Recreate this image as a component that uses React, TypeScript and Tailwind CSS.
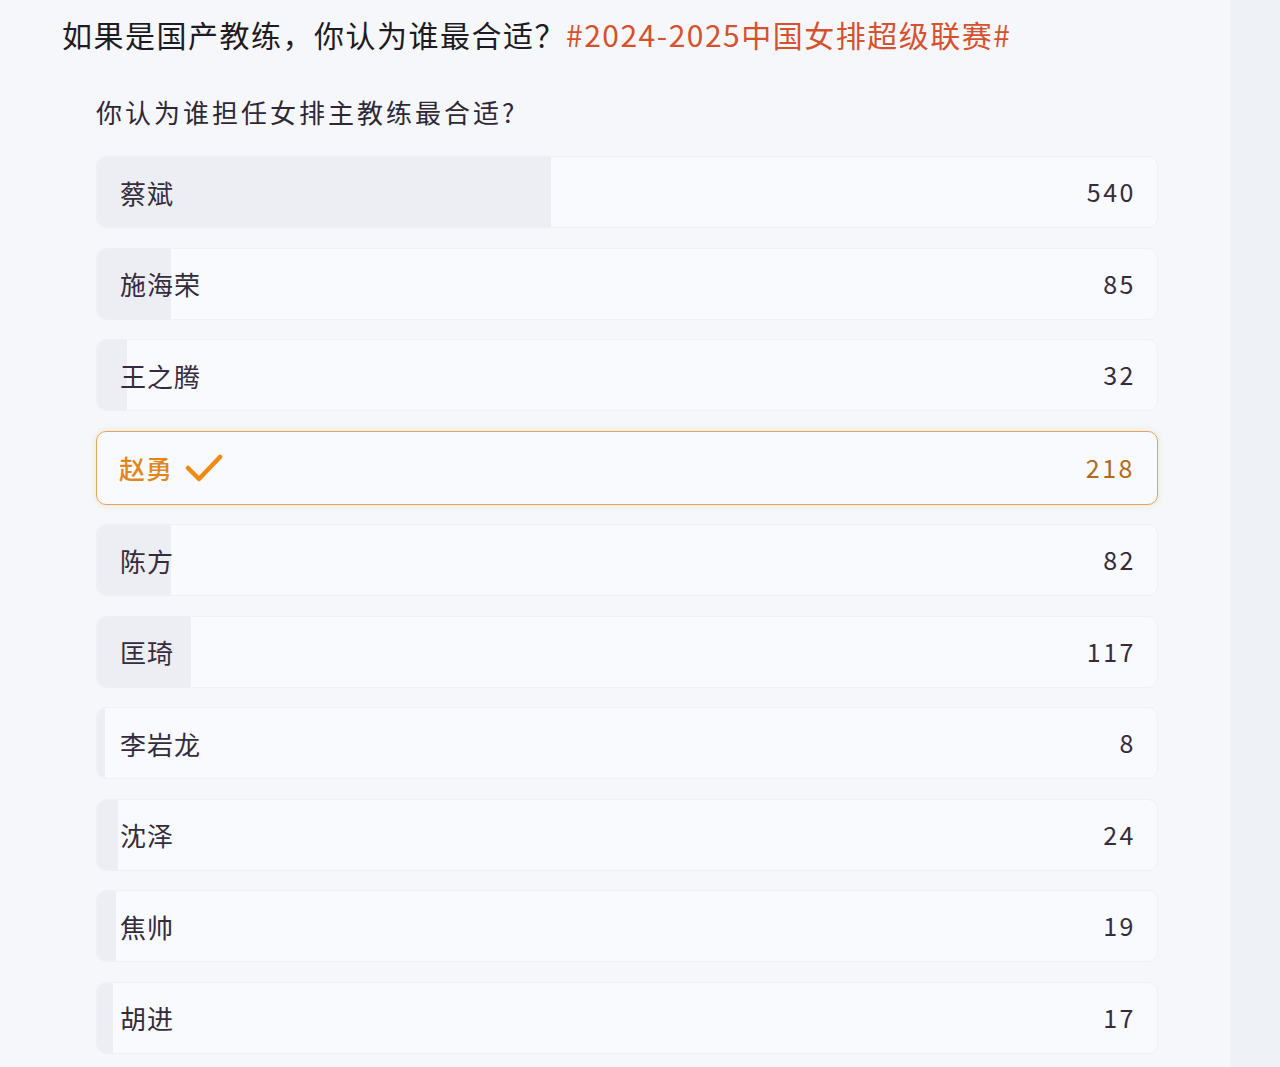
import React from "react";

const OPTIONS = [
  { name: "蔡斌", votes: 540, fill: 454 },
  { name: "施海荣", votes: 85, fill: 74 },
  { name: "王之腾", votes: 32, fill: 30 },
  { name: "赵勇", votes: 218, fill: 180, picked: true },
  { name: "陈方", votes: 82, fill: 74 },
  { name: "匡琦", votes: 117, fill: 94 },
  { name: "李岩龙", votes: 8, fill: 8 },
  { name: "沈泽", votes: 24, fill: 21 },
  { name: "焦帅", votes: 19, fill: 19 },
  { name: "胡进", votes: 17, fill: 16 },
];

function Check() {
  return (
    <svg width="38" height="30" viewBox="0 0 38 30" fill="none">
      <path d="M3 15 L14 26 L35 4" stroke="#f08a12" strokeWidth="4.5" strokeLinecap="round" strokeLinejoin="round" />
    </svg>
  );
}

export default function App() {
  return (
    <div
      className="min-h-[1067px] w-[1280px] flex bg-[#f5f7fb] text-[#2a2530]"
      style={{ fontFamily: '"Noto Sans CJK SC", "Noto Sans", sans-serif' }}
    >
      <div className="flex-1 pl-[62px] pr-[72px] pt-[12px]">
        <h1 className="text-[30px] leading-[44px] font-normal tracking-[1.5px] text-[#1e1b22]">
          如果是国产教练，你认为谁最合适？
          <span className="text-[#d6512f]">#2024-2025中国女排超级联赛#</span>
        </h1>

        <div className="pl-[34px] pt-[38px]">
          <p className="text-[26px] leading-[36px] tracking-[3px] text-[#2e2836] mb-[26px]">你认为谁担任女排主教练最合适?</p>

          <div className="flex flex-col gap-[19.5px]">
            {OPTIONS.map((o) =>
              o.picked ? (
                <div
                  key={o.name}
                  className="h-[74px] rounded-[10px] border-[1.5px] border-[#e3a65a] bg-[#f9fafd] flex items-center justify-between pl-[22px] pr-[22px] shadow-[0_0_6px_rgba(240,170,90,0.25)]"
                >
                  <div className="flex items-center gap-[12px]">
                    <span className="text-[26px] tracking-[1px] text-[#e0861c] font-medium">{o.name}</span>
                    <Check />
                  </div>
                  <span className="text-[25px] tracking-[2.5px] text-[#b06a1c]">{o.votes}</span>
                </div>
              ) : (
                <div
                  key={o.name}
                  className="relative h-[72px] rounded-[10px] bg-[#f9fafd] border border-[#eef0f5] overflow-hidden flex items-center justify-between pl-[23px] pr-[21px]"
                >
                  <div className="absolute left-0 top-0 bottom-0 bg-[#eceef3]" style={{ width: o.fill }} />
                  <span className="relative text-[26px] tracking-[1px] text-[#342c3c]">{o.name}</span>
                  <span className="relative text-[25px] tracking-[2.5px] text-[#342c3c]">{o.votes}</span>
                </div>
              )
            )}
          </div>
        </div>
      </div>
      <div className="w-[50px] bg-[#eef1f6]" />
    </div>
  );
}
